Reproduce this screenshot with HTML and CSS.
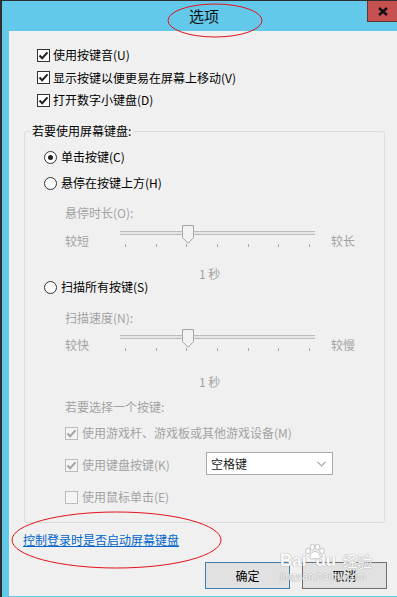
FILE: index.html
```html
<!DOCTYPE html>
<html lang="zh-CN">
<head>
    <meta charset="UTF-8">
    <meta name="viewport" content="width=device-width, initial-scale=1.0">
    <title>选项</title>
    <link rel="stylesheet" href="styles.css">
</head>
<body>
    <div class="window">
        <div class="titlebar">
            <span class="title">选项</span>
            <div class="close">
                <svg width="10" height="9" viewBox="0 0 10 9"><path d="M1 1 L9 8 M9 1 L1 8" stroke="#111" stroke-width="2.4"/></svg>
            </div>
        </div>

        <div class="panel">
            <div class="option"><span class="box"><svg width="11" height="11" viewBox="0 0 11 11"><path d="M1.5 5.5 L4.2 8.2 L9.5 2.3" fill="none" stroke="#222" stroke-width="2"/></svg></span>使用按键音(U)</div>
            <div class="option"><span class="box"><svg width="11" height="11" viewBox="0 0 11 11"><path d="M1.5 5.5 L4.2 8.2 L9.5 2.3" fill="none" stroke="#222" stroke-width="2"/></svg></span>显示按键以便更易在屏幕上移动(V)</div>
            <div class="option"><span class="box"><svg width="11" height="11" viewBox="0 0 11 11"><path d="M1.5 5.5 L4.2 8.2 L9.5 2.3" fill="none" stroke="#222" stroke-width="2"/></svg></span>打开数字小键盘(D)</div>

            <fieldset class="group">
                <legend>若要使用屏幕键盘:</legend>
                <div class="group-body">
                    <div class="radio-row r1"><span class="radio on"></span>单击按键(C)</div>
                    <div class="radio-row r2"><span class="radio"></span>悬停在按键上方(H)</div>

                    <div class="sub hover-label">悬停时长(O):</div>
                    <div class="slider-row hover-slider">
                        <span class="end-label">较短</span>
                        <div class="slider">
                            <div class="track"></div>
                            <svg class="thumb" width="12" height="19" viewBox="0 0 12 19"><path d="M0.5 0.5 H11.5 V12.5 L6 18.3 L0.5 12.5 Z" fill="#f2f2f2" stroke="#a6a6a6"/></svg>
                            <div class="ticks"><i></i><i></i><i></i><i></i><i></i><i></i><i></i></div>
                        </div>
                        <span class="end-label right">较长</span>
                    </div>
                    <div class="value hover-value">1 秒</div>

                    <div class="radio-row r3"><span class="radio"></span>扫描所有按键(S)</div>

                    <div class="sub scan-label">扫描速度(N):</div>
                    <div class="slider-row scan-slider">
                        <span class="end-label">较快</span>
                        <div class="slider">
                            <div class="track"></div>
                            <svg class="thumb" width="12" height="19" viewBox="0 0 12 19"><path d="M0.5 0.5 H11.5 V12.5 L6 18.3 L0.5 12.5 Z" fill="#f2f2f2" stroke="#a6a6a6"/></svg>
                            <div class="ticks"><i></i><i></i><i></i><i></i><i></i><i></i><i></i></div>
                        </div>
                        <span class="end-label right">较慢</span>
                    </div>
                    <div class="value scan-value">1 秒</div>

                    <div class="sub pick-label">若要选择一个按键:</div>
                    <div class="key-option k1"><span class="box dim"><svg width="11" height="11" viewBox="0 0 11 11"><path d="M1.5 5.5 L4.2 8.2 L9.5 2.3" fill="none" stroke="#a3a3a3" stroke-width="2"/></svg></span>使用游戏杆、游戏板或其他游戏设备(M)</div>
                    <div class="key-option k2">
                        <span class="key-label"><span class="box dim"><svg width="11" height="11" viewBox="0 0 11 11"><path d="M1.5 5.5 L4.2 8.2 L9.5 2.3" fill="none" stroke="#a3a3a3" stroke-width="2"/></svg></span>使用键盘按键(K)</span>
                        <div class="select">
                            <span>空格键</span>
                            <svg width="9" height="6" viewBox="0 0 9 6"><path d="M0.5 0.8 L4.5 4.8 L8.5 0.8" fill="none" stroke="#a8a8a8" stroke-width="1.2"/></svg>
                        </div>
                    </div>
                    <div class="key-option k3"><span class="box dim"></span>使用鼠标单击(E)</div>
                </div>
            </fieldset>

            <a class="link" href="#">控制登录时是否启动屏幕键盘</a>

            <div class="buttons">
                <button class="btn default">确定</button>
                <button class="btn">取消</button>
            </div>
        </div>
    </div>

    <!-- red marks drawn over the screenshot -->
    <svg class="marks" width="397" height="597" viewBox="0 0 397 597">
        <ellipse cx="215" cy="20.5" rx="47" ry="16.5" fill="none" stroke="#e3121b" stroke-width="1"/>
        <ellipse cx="116.5" cy="540" rx="104.5" ry="28" fill="none" stroke="#e3121b" stroke-width="1"/>
    </svg>

    <div class="watermark">
        <svg class="wm-paw" width="20" height="16" viewBox="0 0 20 16">
            <g fill="#fff" stroke="#b5b5b5" stroke-width="0.8">
                <ellipse cx="3" cy="7" rx="2.3" ry="2.8"/>
                <ellipse cx="7.5" cy="3" rx="2.3" ry="2.8"/>
                <ellipse cx="12.5" cy="3" rx="2.3" ry="2.8"/>
                <ellipse cx="17" cy="7" rx="2.3" ry="2.8"/>
                <path d="M10 7.5 C7 7.5 4.5 11 5 13.5 C5.5 15.5 8 15 10 14.5 C12 15 14.5 15.5 15 13.5 C15.5 11 13 7.5 10 7.5 Z"/>
            </g>
        </svg>
        <div class="wm-top"><span>Bai</span><span class="wm-du">du</span><span class="wm-jy">经验</span></div>
        <div class="wm-url">jingyan.baidu.com</div>
    </div>
</body>
</html>
```

FILE: styles.css
```css
body { margin: 0; height: 597px; overflow: hidden; background: #2f2f2f; font-family: "Noto Sans CJK SC", "Noto Sans", sans-serif; font-size: 12px; color: #000; position: relative; }

.window { margin: 1px 0 0 2px; padding-left: 7px; height: 596px; background: #63c9ea; }

.titlebar { height: 30px; display: flex; align-items: flex-start; }

.title { margin-left: 180px; font-size: 15px; line-height: 30px; color: #111; }

.close { margin-left: auto; width: 30px; height: 21px; box-sizing: border-box; background: #c75050; border-left: 1px solid #5e3434; border-bottom: 1px solid #5e3434; display: flex; align-items: center; justify-content: center; }

.panel { height: 565px; padding-top: 13px; box-sizing: border-box; background: #f0f0f0; }

.option { display: flex; align-items: center; gap: 3px; height: 22.5px; padding-left: 28px; line-height: 14px; }

.box { width: 13px; height: 13px; box-sizing: border-box; border: 1px solid #333; background: #fff; display: flex; align-items: center; justify-content: center; flex: none; }

.box.dim { border-color: #bcbcbc; background: #f4f4f4; }

.group { margin: 12.5px 12px 0 15px; padding: 0 0 18px 5px; border: 1px solid #dcdcdc; border-radius: 3px; }

.group legend { padding: 0 2px; line-height: 14px; }

.group-body { padding-left: 14px; }

.radio-row { display: flex; align-items: center; gap: 4px; height: 14px; line-height: 14px; }

.radio { width: 13px; height: 13px; box-sizing: border-box; border: 1px solid #333; border-radius: 50%; background: #fff; display: flex; align-items: center; justify-content: center; }

.radio.on::after { content: ""; width: 5px; height: 5px; border-radius: 50%; background: #222; }

.r1 { margin-top: 12px; }
.r2 { margin-top: 12px; }
.r3 { margin-top: 0; }

.sub { padding-left: 21px; color: #a3a3a3; line-height: 14px; }

.hover-label { margin-top: 16px; }
.scan-label { margin-top: 17px; }
.pick-label { margin-top: 11px; }

.slider-row { display: flex; height: 30px; padding-left: 21px; color: #a3a3a3; }
.hover-slider { margin-top: 2px; }
.scan-slider { margin-top: 1px; }

.end-label { width: 55px; margin-top: 12px; line-height: 14px; }
.end-label.right { width: auto; margin-left: 16px; }

.slider { width: 195px; position: relative; }

.track { margin-top: 9px; height: 2px; border-top: 1px solid #b8bcbc; border-bottom: 1px solid #b8bcbc; background: #e6e8e8; }

.thumb { position: absolute; left: 62px; top: 3px; }

.ticks { margin-top: 9px; padding: 0 5px; display: flex; justify-content: space-between; }
.ticks i { width: 1px; height: 3px; background: #a8a8a8; }

.value { padding-left: 155px; color: #a3a3a3; }
.hover-value { margin-top: 16px; height: 12px; line-height: 12px; }
.scan-value { margin-top: 19px; line-height: 14px; }

.key-option { display: flex; align-items: center; gap: 4px; padding-left: 21px; height: 14px; line-height: 14px; color: #a3a3a3; }
.k1 { margin-top: 12px; }
.k2 { margin-top: 12px; height: 23px; }
.k3 { margin-top: 15px; }

.key-label { width: 137px; display: flex; align-items: center; gap: 4px; margin-top: 3px; }

.select { width: 127px; height: 23px; box-sizing: border-box; border: 1px solid #a9a9a9; background: #fff; color: #222; display: flex; align-items: center; justify-content: space-between; padding: 0 6px 0 4px; }

.link { display: block; width: max-content; margin: 10px 0 0 14px; line-height: 14px; color: #0066cc; }

.buttons { display: flex; justify-content: flex-end; gap: 12px; margin-top: 15px; padding-right: 10px; }

.btn { width: 85px; height: 27px; padding: 0; background: #e1e1e1; border: 1px solid #707070; font-family: inherit; font-size: 12px; color: #000; }
.btn.default { border-color: #3c7fb1; }

.marks { position: absolute; left: 0; top: 0; pointer-events: none; }

.watermark { position: absolute; left: 280px; top: 551px; color: #fff; text-shadow: 0 0 1px #9a9a9a, 0 0 1px #9a9a9a; pointer-events: none; font-family: "Liberation Sans", sans-serif; opacity: 0.9; }
.wm-paw { position: absolute; left: 25px; top: -7px; }
.wm-top { display: flex; align-items: flex-end; font-size: 17px; font-weight: bold; line-height: 20px; }
.wm-du { margin-left: 9px; }
.wm-jy { margin-left: 6px; font-size: 15px; font-family: "Noto Sans CJK SC", sans-serif; font-weight: normal; }
.wm-url { font-size: 10px; line-height: 12px; letter-spacing: 0.3px; }
```
